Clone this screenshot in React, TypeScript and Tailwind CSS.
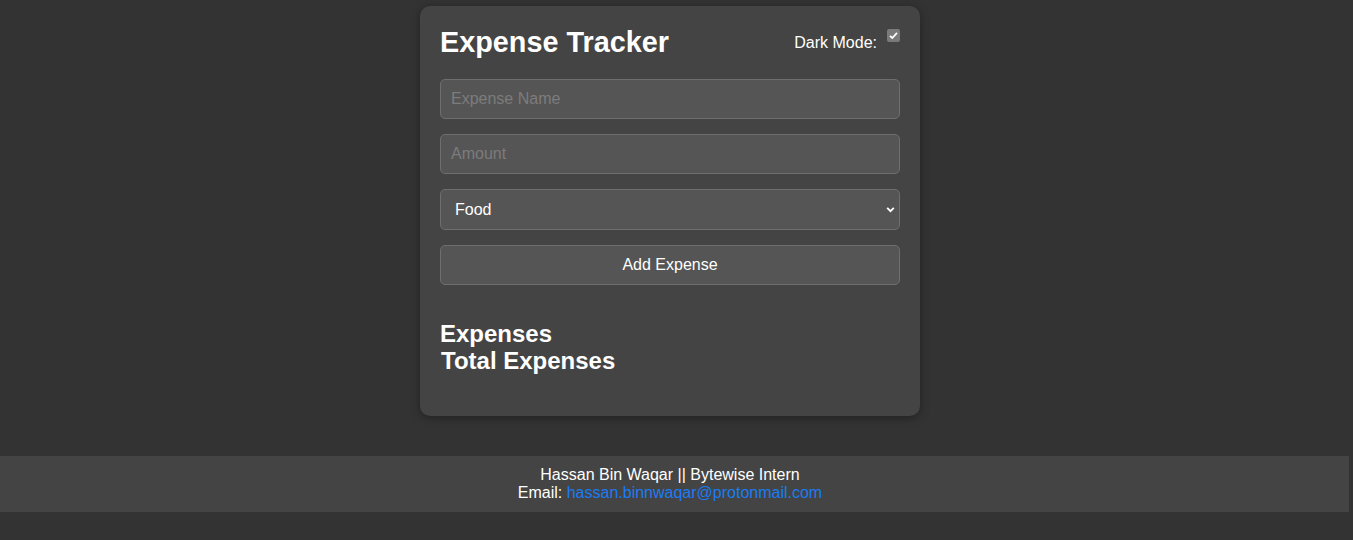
import React, { useState } from "react";

export default function App() {
  const [dark, setDark] = useState(true);
  const [category, setCategory] = useState("Food");

  return (
    <div className="min-h-screen bg-[#333333] text-white font-['Liberation_Sans',Arial,sans-serif]">
      {/* card */}
      <div className="flex justify-center pt-[6px] pr-[13px]">
        <div className="w-[500px] bg-[#444444] rounded-[10px] px-5 pt-5 pb-[42px] shadow-[0_2px_10px_rgba(0,0,0,0.35)]">
          <div className="flex justify-between items-start mb-5">
            <h1 className="text-[28.8px] font-bold leading-[33px]">Expense Tracker</h1>
            <label className="flex items-start gap-[10px] mt-[3px] text-base leading-[18px] cursor-pointer">
              <span className="mt-[5px]">Dark Mode:</span>
              <span className="relative w-[13px] h-[13px]">
                <input
                  type="checkbox"
                  checked={dark}
                  onChange={() => setDark(!dark)}
                  className="appearance-none w-[13px] h-[13px] rounded-[2px] bg-[#7a7a7a] block m-0"
                />
                {dark && (
                  <svg viewBox="0 0 13 13" className="absolute inset-0 w-[13px] h-[13px] pointer-events-none">
                    <path d="M3 6.8 L5.3 9 L10 3.8" fill="none" stroke="#ffffff" strokeWidth="1.8" />
                  </svg>
                )}
              </span>
            </label>
          </div>

          <div className="flex flex-col gap-[15px]">
            <input
              placeholder="Expense Name"
              className="h-10 px-[10px] bg-[#555555] border border-[#6e6e6e] rounded-[5px] text-base text-white placeholder:text-[#7c7c7c] outline-none"
            />
            <input
              placeholder="Amount"
              type="number"
              className="h-10 px-[10px] bg-[#555555] border border-[#6e6e6e] rounded-[5px] text-base text-white placeholder:text-[#7c7c7c] outline-none"
            />
            <div className="relative">
              <select
                value={category}
                onChange={(e) => setCategory(e.target.value)}
                className="appearance-none w-full h-[41px] pl-[14px] pr-8 bg-[#555555] border border-[#6e6e6e] rounded-[5px] text-base text-white outline-none"
              >
                <option>Food</option>
                <option>Transport</option>
                <option>Entertainment</option>
                <option>Other</option>
              </select>
              <svg viewBox="0 0 10 10" className="absolute right-[4px] top-[15px] w-[11px] h-[11px] pointer-events-none">
                <path d="M2 3.5 L5 6.5 L8 3.5" fill="none" stroke="#ffffff" strokeWidth="1.7" />
              </svg>
            </div>
            <button className="h-10 bg-[#555555] border border-[#6e6e6e] rounded-[5px] text-base text-white">
              Add Expense
            </button>
          </div>

          <h2 className="mt-[35px] text-2xl font-bold leading-[27px]">Expenses</h2>
          <h2 className="text-2xl font-bold leading-[27px] pl-[1px]">Total Expenses</h2>
        </div>
      </div>

      {/* footer */}
      <footer className="mt-[40px] mr-[4px] pr-[9px] py-[10px] bg-[#444444] text-center text-base leading-[18px]">
        <p>Hassan Bin Waqar || Bytewise Intern</p>
        <p>
          Email:{" "}
          <a href="#" className="text-[#1a7cf5]">
            hassan.binnwaqar@protonmail.com
          </a>
        </p>
      </footer>
    </div>
  );
}
